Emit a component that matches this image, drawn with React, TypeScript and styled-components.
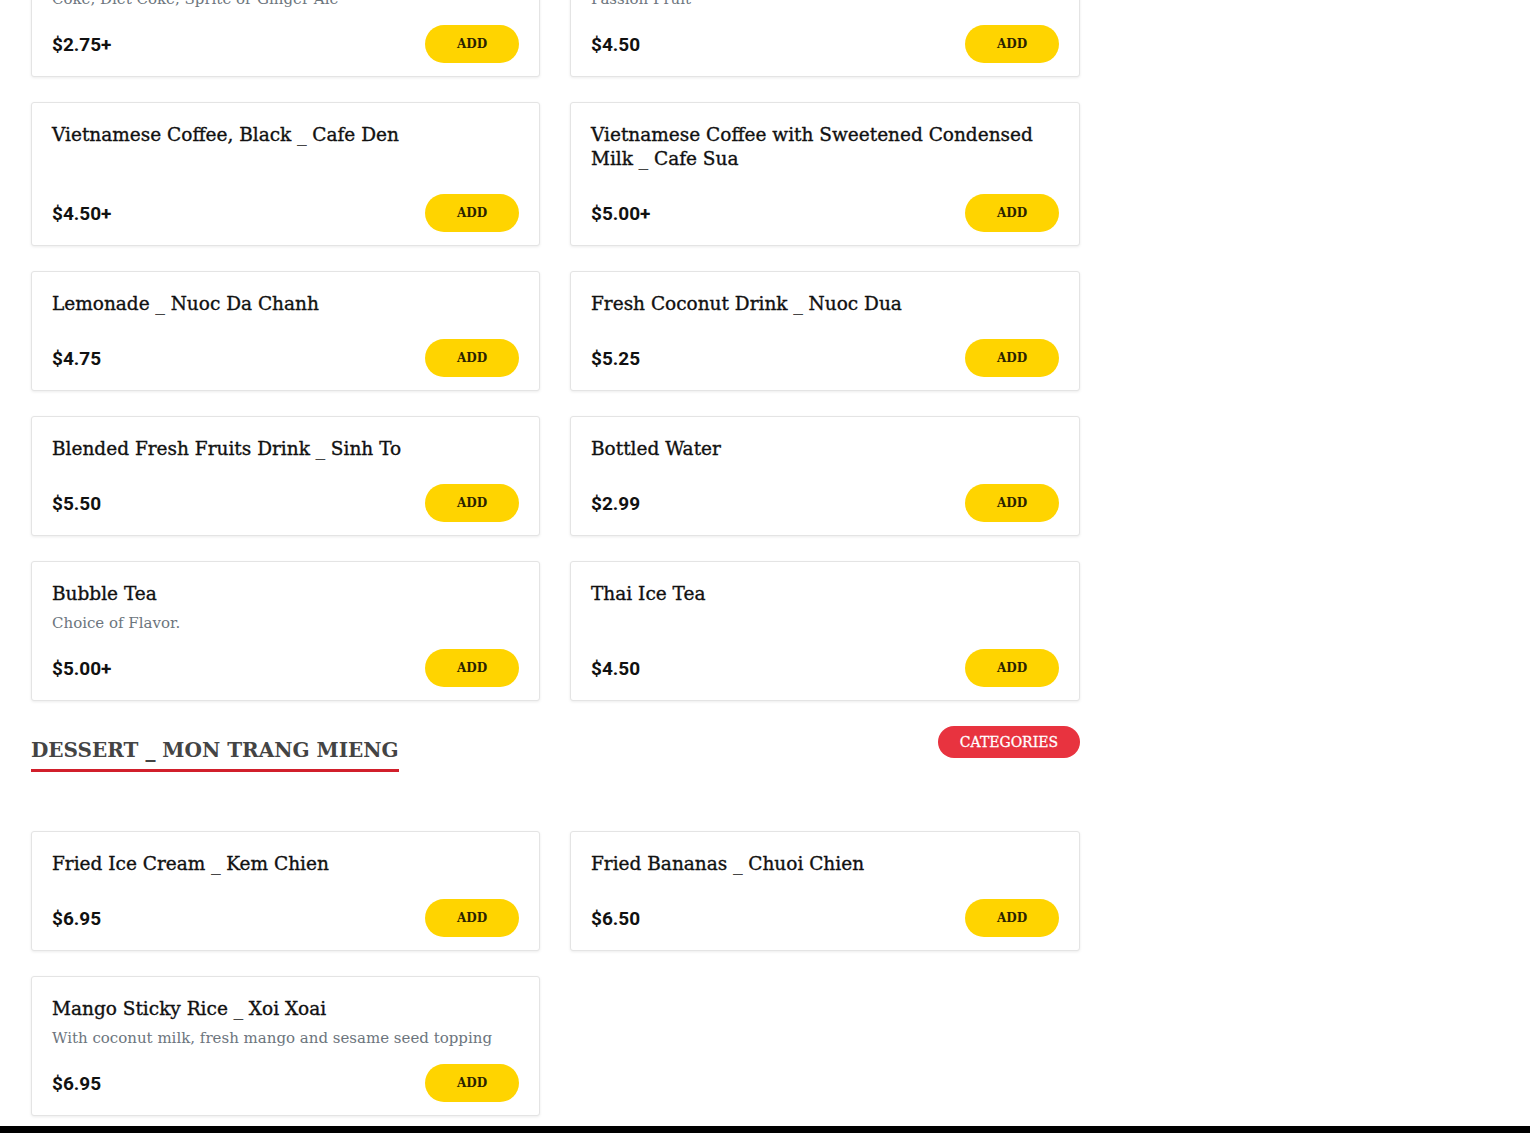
import * as React from "react";
import styled, { createGlobalStyle } from "styled-components";

const GlobalStyle = createGlobalStyle`
  html, body {
    margin: 0;
    padding: 0;
    background: #ffffff;
    overflow: hidden;
  }
  body {
    font-family: "DejaVu Serif", "Liberation Serif", serif;
    color: #111111;
  }
`;

const SLAB = `"DejaVu Serif", "Liberation Serif", serif`;

type Item = { name: string; desc?: string; price: string };

const drinks: Item[] = [
  { name: "Soft Drinks", desc: "Coke, Diet Coke, Sprite or Ginger Ale", price: "$2.75+" },
  { name: "Fresh Juice", desc: "Passion Fruit", price: "$4.50" },
  { name: "Vietnamese Coffee, Black _ Cafe Den", price: "$4.50+" },
  { name: "Vietnamese Coffee with Sweetened Condensed Milk _ Cafe Sua", price: "$5.00+" },
  { name: "Lemonade _ Nuoc Da Chanh", price: "$4.75" },
  { name: "Fresh Coconut Drink _ Nuoc Dua", price: "$5.25" },
  { name: "Blended Fresh Fruits Drink _ Sinh To", price: "$5.50" },
  { name: "Bottled Water", price: "$2.99" },
  { name: "Bubble Tea", desc: "Choice of Flavor.", price: "$5.00+" },
  { name: "Thai Ice Tea", price: "$4.50" },
];

const desserts: Item[] = [
  { name: "Fried Ice Cream _ Kem Chien", price: "$6.95" },
  { name: "Fried Bananas _ Chuoi Chien", price: "$6.50" },
  {
    name: "Mango Sticky Rice _ Xoi Xoai",
    desc: "With coconut milk, fresh mango and sesame seed topping",
    price: "$6.95",
  },
];

// the page is shown scrolled: the first row of cards is partly above the fold
const Page = styled.div`
  width: 1049px;
  margin: -63px 0 0 31px;
`;

const Grid = styled.div`
  display: grid;
  grid-template-columns: 509px 510px;
  column-gap: 30px;
  row-gap: 25px;
`;

const Card = styled.div`
  display: flex;
  flex-direction: column;
  background: #ffffff;
  border: 1px solid #e4e4e4;
  border-radius: 3px;
  box-shadow: 0 1px 3px rgba(0, 0, 0, 0.08);
  padding: 20px 20px 13px;
`;

const Title = styled.h3`
  margin: 0;
  font-family: ${SLAB};
  font-size: 18.5px;
  font-weight: 400;
  line-height: 24px;
  color: #111111;
  -webkit-text-stroke: 0.35px #111111;
`;

const Desc = styled.p`
  margin: 5px 0 0;
  font-family: ${SLAB};
  font-size: 15px;
  font-weight: 300;
  line-height: 24px;
  color: #6c757d;
`;

const PriceRow = styled.div<{ $tight?: boolean }>`
  display: flex;
  align-items: center;
  justify-content: space-between;
  margin-top: auto;
  padding-top: ${(p) => (p.$tight ? "14px" : "23px")};
`;

const Price = styled.span`
  font-family: Roboto, "Liberation Sans", sans-serif;
  font-size: 19px;
  font-weight: 700;
  color: #111111;
`;

const AddButton = styled.button`
  width: 94px;
  height: 38px;
  border: none;
  border-radius: 19px;
  background: #ffd400;
  font-family: ${SLAB};
  font-size: 12px;
  font-weight: 700;
  color: #2a2200;
  cursor: pointer;
`;

const SectionHead = styled.div`
  display: flex;
  justify-content: space-between;
  align-items: flex-start;
  margin: 25px 0 59px;
`;

const SectionTitle = styled.h2`
  display: inline-block;
  margin: 0;
  padding: 8px 0 3px;
  font-family: ${SLAB};
  font-size: 20px;
  font-weight: 700;
  line-height: 32px;
  color: #444444;
  text-transform: uppercase;
  border-bottom: 3px solid #d11f2b;
`;

const CategoriesButton = styled.button`
  height: 32px;
  padding: 0 22px;
  border: none;
  border-radius: 16px;
  background: #e8333f;
  color: #ffffff;
  font-family: ${SLAB};
  font-size: 14px;
  font-weight: 400;
  -webkit-text-stroke: 0.3px #ffffff;
  text-transform: uppercase;
`;

const Footer = styled.div`
  margin-top: 10px;
  height: 120px;
  background: #000000;
`;

function MenuCard({ item }: { item: Item }) {
  return (
    <Card>
      <Title>{item.name}</Title>
      {item.desc && <Desc>{item.desc}</Desc>}
      <PriceRow $tight={!!item.desc}>
        <Price>{item.price}</Price>
        <AddButton>ADD</AddButton>
      </PriceRow>
    </Card>
  );
}

export default function App() {
  return (
    <>
      <GlobalStyle />
      <Page>
        <Grid>
          {drinks.map((d) => (
            <MenuCard key={d.name} item={d} />
          ))}
        </Grid>
        <SectionHead>
          <SectionTitle>Dessert _ Mon Trang Mieng</SectionTitle>
          <CategoriesButton>Categories</CategoriesButton>
        </SectionHead>
        <Grid>
          {desserts.map((d) => (
            <MenuCard key={d.name} item={d} />
          ))}
        </Grid>
      </Page>
      <Footer />
    </>
  );
}
